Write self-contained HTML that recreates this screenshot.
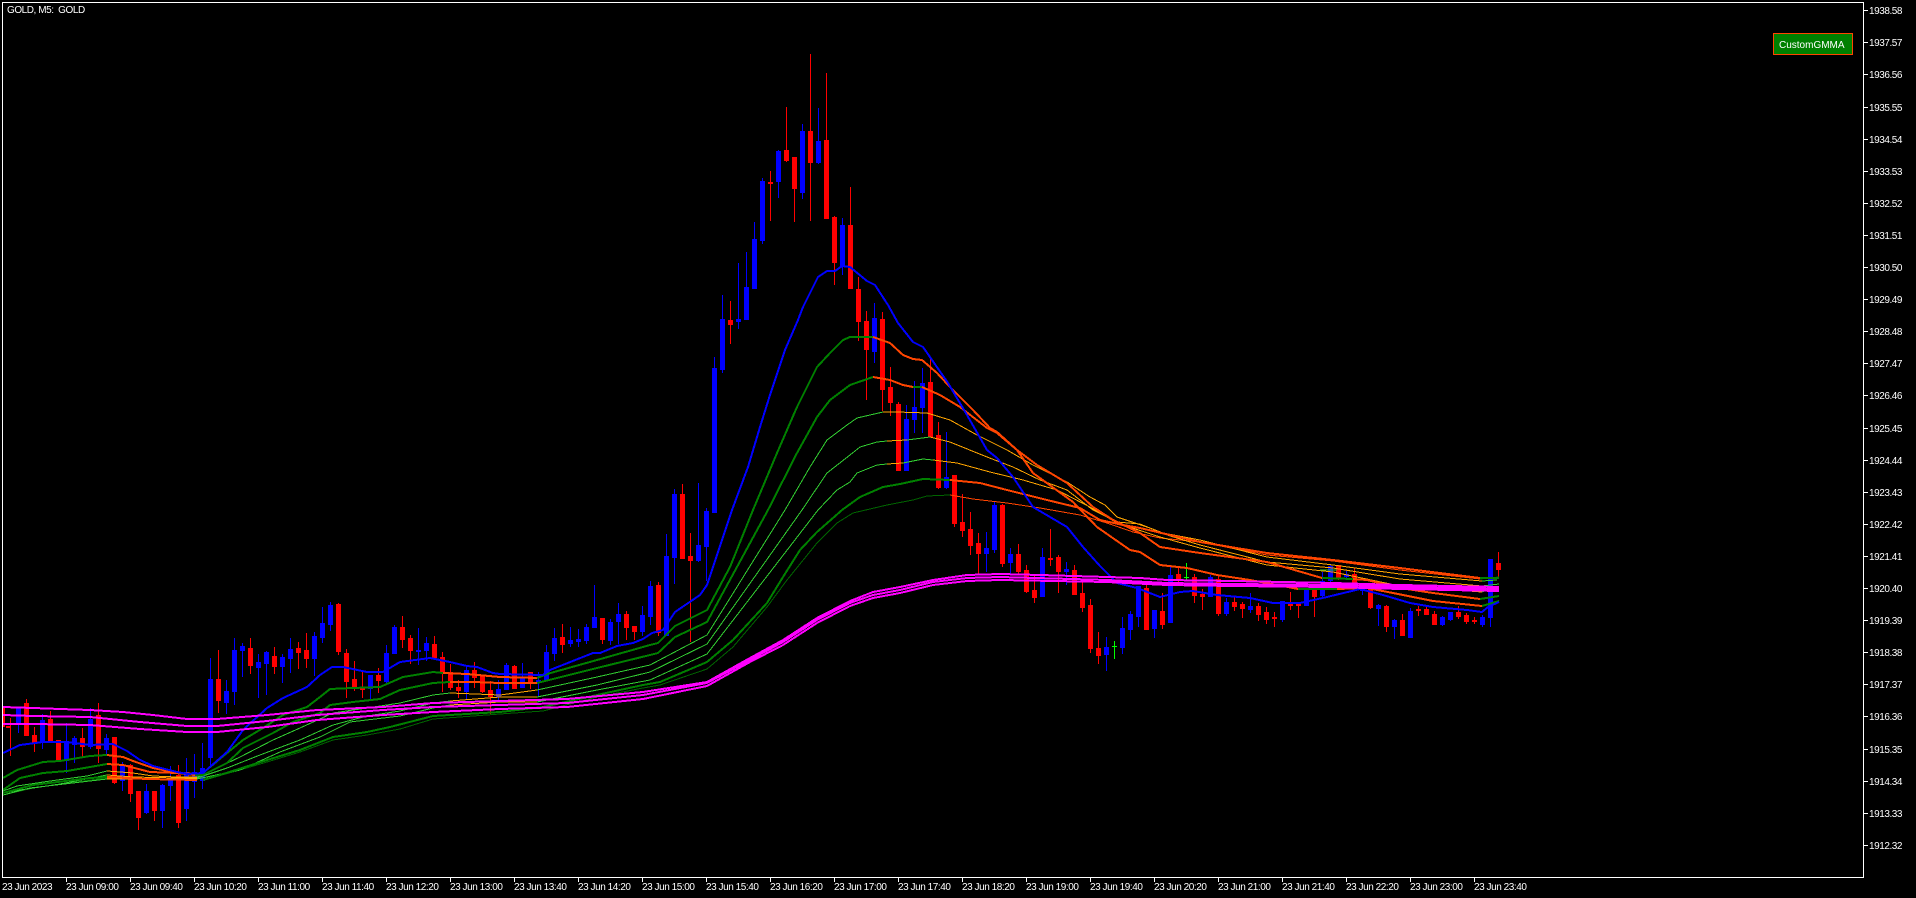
<!DOCTYPE html>
<html lang="en">
<head>
<meta charset="utf-8">
<title>GOLD, M5</title>
<style>
html,body{margin:0;padding:0;background:#000;width:1916px;height:898px;overflow:hidden}
svg{display:block}
text{font-family:"Liberation Sans",sans-serif;font-size:10px;fill:#fff;letter-spacing:-.45px}
.l{fill:none;shape-rendering:crispEdges;stroke-linejoin:round}
.w{stroke-width:1}
.b{stroke-width:5}
.T{stroke-width:2}
.t{stroke-width:1}
.g{stroke:#008000}
.o{stroke:#FF4500}
.lg{stroke:#32CD32}
.y{stroke:#FFA500}
.d{stroke:#006400}
.m{stroke:#FF00FF;stroke-width:2}
</style>
</head>
<body>
<svg width="1916" height="898" viewBox="0 0 1916 898" xmlns="http://www.w3.org/2000/svg">
<rect width="1916" height="898" fill="#000"/>

<!-- red wicks -->
<path class="l w" stroke="#FF0000" d="M10.5 718V756M26.5 699V736M34.5 727V752M50.5 711V742M58.5 740V761M82.5 728V758M98.5 703V763M114.5 737V784M130.5 764V802M138.5 791V830M154.5 791V821M178.5 765V828M218.5 650V713M250.5 638V674M274.5 647V674M298.5 642V669M306.5 633V668M338.5 603V655M346.5 649V698M354.5 661V691M362.5 672V698M378.5 668V693M402.5 616V648M410.5 635V664M434.5 636V660M442.5 652V692M450.5 664V690M458.5 680V698M474.5 662V688M482.5 675V693M490.5 681V714M514.5 665V688M530.5 672V689M562.5 624V653M602.5 618V644M626.5 611V640M634.5 626V640M658.5 582V636M682.5 484V559M690.5 533V642M730.5 301V344M770.5 171V221M786.5 107V162M794.5 157V222M810.5 54V221M826.5 73V218M834.5 216V285M850.5 187V289M858.5 277V341M866.5 311V400M882.5 312V411M890.5 367V416M898.5 402V471M930.5 358V437M938.5 422V489M954.5 475V527M962.5 494V537M970.5 512V555M978.5 533V574M1002.5 504V567M1018.5 544V574M1026.5 565V593M1034.5 576V603M1050.5 529V566M1058.5 555V593M1074.5 565V595M1082.5 582V612M1090.5 599V653M1098.5 632V664M1146.5 585V630M1162.5 593V629M1178.5 567V584M1194.5 574V603M1202.5 589V610M1218.5 575V616M1234.5 597V611M1242.5 602V618M1258.5 603V621M1266.5 607V624M1274.5 612V627M1290.5 592V610M1298.5 604V618M1314.5 587V617M1338.5 565V580M1354.5 568V585M1370.5 587V609M1386.5 605V632M1402.5 614V635M1418.5 606V616M1426.5 607V615M1434.5 611V624M1458.5 606V619M1466.5 613V624M1474.5 617V624M1498.5 552V578"/>
<!-- red bodies -->
<path class="l b" stroke="#FF0000" d="M8.5 726V728M26.5 703V736M34.5 735V744M50.5 719V742M58.5 740V761M82.5 738V747M98.5 715V749M114.5 737V783M130.5 765V794M138.5 791V818M154.5 791V811M178.5 775V823M218.5 679V701M250.5 648V666M274.5 656V667M298.5 648V653M306.5 650V659M338.5 604V652M346.5 653V682M354.5 679V688M362.5 687V690M378.5 675V681M402.5 627V640M410.5 638V651M434.5 644V658M442.5 657V673M450.5 672V688M458.5 687V691M474.5 670V678M482.5 676V692M490.5 690V697M514.5 666V689M530.5 672V683M562.5 637V645M602.5 618V640M626.5 614V628M634.5 626V632M658.5 585V633M682.5 494V559M690.5 556V561M730.5 320V325M770.5 182V184M786.5 150V161M794.5 157V189M810.5 131V163M826.5 140V219M834.5 217V263M850.5 225V289M858.5 289V322M866.5 321V350M882.5 319V390M890.5 387V403M898.5 404V471M930.5 382V437M938.5 435V488M954.5 475V524M962.5 522V531M970.5 529V546M978.5 543V554M1002.5 505V564M1018.5 554V572M1026.5 570V592M1034.5 590V598M1050.5 558V560M1058.5 557V572M1074.5 570V595M1082.5 593V608M1090.5 605V649M1098.5 648V656M1146.5 588V630M1162.5 611V625M1178.5 574V579M1186.5 0V0M1194.5 577V596M1202.5 594V597M1218.5 579V614M1234.5 602V607M1242.5 604V609M1258.5 606V615M1266.5 612V620M1274.5 617V619M1290.5 604V606M1298.5 604V606M1314.5 590V597M1338.5 565V579M1354.5 574V584M1370.5 588V608M1386.5 606V627M1402.5 620V636M1418.5 609V611M1426.5 609V615M1434.5 614V625M1458.5 612V617M1466.5 615V622M1474.5 620V622M1498.5 563V570"/>
<rect x="3" y="707" width="2" height="20" fill="#FF0000"/>
<!-- blue wicks -->
<path class="l w" stroke="#0000FF" d="M18.5 707V733M42.5 714V749M66.5 723V773M74.5 736V763M90.5 708V749M106.5 734V755M122.5 762V791M146.5 784V814M162.5 784V828M170.5 766V801M186.5 758V821M194.5 754V798M202.5 743V789M210.5 658V767M226.5 680V714M234.5 638V705M242.5 643V677M258.5 654V698M266.5 651V695M282.5 654V683M290.5 638V673M314.5 632V676M322.5 607V643M330.5 602V631M370.5 675V700M386.5 645V685M394.5 625V654M418.5 628V665M426.5 637V661M466.5 666V700M498.5 680V700M506.5 663V690M522.5 663V688M538.5 672V697M546.5 645V680M554.5 628V661M570.5 627V647M578.5 629V647M586.5 624V644M594.5 585V628M610.5 619V645M618.5 603V644M642.5 606V636M650.5 581V625M666.5 534V635M674.5 489V584M698.5 483V562M706.5 508V581M714.5 357V512M722.5 295V373M738.5 263V329M746.5 252V320M754.5 222V288M762.5 178V244M778.5 150V198M802.5 124V199M818.5 108V164M842.5 218V275M874.5 303V363M906.5 405V470M914.5 381V433M922.5 368V433M946.5 432V489M986.5 532V572M994.5 501V553M1010.5 548V575M1042.5 548V596M1066.5 562V585M1106.5 637V671M1122.5 617V654M1130.5 611V640M1138.5 586V627M1154.5 610V638M1170.5 567V622M1210.5 575V597M1226.5 598V616M1250.5 593V613M1282.5 601V622M1306.5 590V605M1322.5 572V597M1330.5 565V583M1346.5 571V580M1362.5 583V595M1378.5 604V626M1394.5 619V639M1410.5 608V638M1442.5 616V626M1450.5 612V621M1482.5 615V627M1490.5 559V627"/>
<!-- blue bodies -->
<path class="l b" stroke="#0000FF" d="M18.5 707V724M42.5 720V743M66.5 741V761M74.5 738V745M90.5 719V747M106.5 738V750M122.5 766V781M146.5 791V813M162.5 785V811M170.5 780V786M186.5 772V809M194.5 772V782M202.5 768V781M210.5 679V758M226.5 691V703M234.5 650V692M242.5 646V651M258.5 662V668M266.5 652V664M282.5 657V667M290.5 649V659M314.5 636V659M322.5 623V638M330.5 605V625M370.5 675V689M386.5 653V682M394.5 627V654M418.5 650V652M426.5 643V651M466.5 670V692M498.5 689V697M506.5 665V690M522.5 677V688M538.5 680V683M546.5 652V681M554.5 638V654M570.5 640V644M578.5 639V642M586.5 627V641M594.5 617V628M610.5 622V641M618.5 614V622M642.5 615V632M650.5 586V617M666.5 556V636M674.5 494V558M698.5 545V561M706.5 511V547M714.5 368V513M722.5 319V370M738.5 319V322M746.5 287V320M754.5 239V289M762.5 181V241M778.5 151V182M802.5 131V193M818.5 141V163M842.5 225V267M874.5 318V352M906.5 419V471M914.5 407V420M922.5 383V408M946.5 477V488M986.5 548V554M994.5 505V550M1010.5 554V563M1042.5 557V597M1066.5 569V572M1106.5 647V655M1122.5 628V648M1130.5 614V630M1138.5 586V617M1154.5 610V629M1170.5 575V623M1210.5 577V597M1226.5 602V614M1250.5 606V610M1282.5 601V620M1306.5 590V606M1322.5 581V596M1330.5 566V581M1346.5 574V577M1362.5 587V591M1378.5 605V609M1394.5 620V627M1410.5 611V638M1442.5 617V625M1450.5 612V620M1482.5 617V625M1490.5 559V618"/>
<!-- lime dojis -->
<path class="l w" stroke="#00FF00" d="M1114.5 641V659M1186.5 563V580"/>
<path class="l" stroke="#00FF00" stroke-width="1" d="M1112 646.5H1117M1184 577.5H1189"/>

<!-- thin8 -->
<polyline class="l t d" points="3,795 33,788 90,780 107,778"/>
<polyline class="l t o" points="107,778 197,780"/>
<polyline class="l t d" points="203,780 233,772 267,762 300,752 333,740 367,735 400,729 433,719 500,714 543,711 597,697 643,688 660,685 707,669 733,647 767,607 787,580 817,543 837,523 853,513 887,505 913,500 927,496 950,495"/>
<polyline class="l t o" points="950,495 973,499 1007,503 1040,508 1080,515 1107,523 1133,532 1160,538 1200,542 1267,555 1333,561 1400,570 1480,579"/>
<polyline class="l t d" points="1480,579 1499,577"/>

<!-- thin6 -->
<polyline class="l t lg" points="3,795 30,788 107,779"/>
<polyline class="l t y" points="107,779 197,779"/>
<polyline class="l t lg" points="197,779 240,770 280,752 320,737 350,722 400,716 433,708 450,705"/>
<polyline class="l t y" points="450,705 500,702 537,702"/>
<polyline class="l t lg" points="537,702 597,690 650,680 707,654 818,510 837,490 850,482 857,473 877,465 887,464"/>
<polyline class="l t y" points="887,464 903,463"/>
<polyline class="l t lg" points="903,463 923,459 933,460"/>
<polyline class="l t y" points="933,460 957,463 990,472 1023,480 1057,490 1090,507 1117,523 1160,537 1200,548 1267,565 1333,572 1400,586 1482,592"/>
<polyline class="l t lg" points="1482,592 1490,589"/>

<!-- thin5 -->
<polyline class="l t lg" points="3,793 20,790 60,784 107,775"/>
<polyline class="l t y" points="107,775 133,777 177,778 197,778"/>
<polyline class="l t lg" points="197,778 227,768 260,755 300,740 333,725 367,716 400,711 433,703 450,701"/>
<polyline class="l t y" points="450,701 500,697 537,697"/>
<polyline class="l t lg" points="537,697 597,685 650,672 707,644 802,510 827,473 850,455 860,447 877,442 887,441"/>
<polyline class="l t y" points="887,441 907,440"/>
<polyline class="l t lg" points="907,440 930,437"/>
<polyline class="l t y" points="930,437 950,442 987,457 1013,467 1040,480 1067,490 1093,510 1117,522 1140,524 1167,535 1200,545 1267,562 1333,568 1400,579 1482,586"/>
<polyline class="l t lg" points="1482,586 1499,584"/>

<!-- thin4 -->
<polyline class="l t lg" points="3,791 17,786 50,781 87,776 107,771"/>
<polyline class="l t y" points="107,771 133,773 153,776 177,777 197,777"/>
<polyline class="l t lg" points="197,777 213,770 240,757 273,740 300,728 333,713 367,708 400,703 433,695 450,693"/>
<polyline class="l t y" points="450,693 500,695 537,690"/>
<polyline class="l t lg" points="537,690 597,677 650,665 707,635 785,510 810,467 827,440 847,425 857,418 883,412"/>
<polyline class="l t y" points="883,412 897,412 927,413 950,420 977,435 1007,450 1033,465 1067,482 1090,497 1105,505 1117,517 1150,528 1163,533 1200,540 1267,557 1333,565 1400,574 1482,581"/>
<polyline class="l t lg" points="1482,581 1497,580"/>
<polyline class="l t lg" points="1320,570 1337,570"/>

<!-- thick7 -->
<polyline class="l T g" points="3,793 33,785 90,778 107,777"/>
<polyline class="l T o" points="107,777 147,779 197,780"/>
<polyline class="l T g" points="203,780 220,775 267,760 300,750 333,737 367,732 390,727 433,716 500,712 543,707 597,695 643,685 660,682 700,665 707,662 733,640 767,603 783,577 800,550 817,532 833,518 842,510 860,497 883,487 900,484 923,479 950,480"/>
<polyline class="l T o" points="950,480 980,483 1007,490 1047,500 1080,508 1100,520 1123,525 1140,528 1200,542 1267,553 1333,560 1400,568 1480,578"/>
<polyline class="l T g" points="1480,578 1499,578"/>

<!-- thick3 -->
<polyline class="l T g" points="3,790 20,778 43,773 67,771 90,767 107,764"/>
<polyline class="l T o" points="107,764 123,765 150,772 177,773 195,775"/>
<polyline class="l T g" points="195,775 203,775 227,763 243,748 273,733 293,722 320,713 330,705 353,702 380,699 400,690 433,683 450,682"/>
<polyline class="l T o" points="450,682 473,682 500,683 537,683"/>
<polyline class="l T g" points="537,683 597,668 650,655 658,653 675,637 707,622 768,510 797,453 817,417 830,400 850,385 873,377"/>
<polyline class="l T o" points="873,377 890,380 903,385 913,387"/>
<polyline class="l T g" points="913,387 922,387"/>
<polyline class="l T o" points="922,387 940,395 960,407 987,428 997,433 1017,450 1037,465 1067,483 1093,507 1113,520 1140,533 1160,547 1200,553 1267,562 1322,578"/>
<polyline class="l T g" points="1322,578 1353,579"/>
<polyline class="l T o" points="1353,579 1367,580 1400,588 1433,593 1480,599"/>
<polyline class="l T g" points="1480,599 1499,596"/>

<!-- thick2 -->
<polyline class="l T g" points="3,778 17,770 43,762 60,761 90,756 107,755"/>
<polyline class="l T o" points="107,755 123,757 133,761 153,768 177,773 195,774"/>
<polyline class="l T g" points="195,774 203,773 227,753 243,740 263,728 283,715 307,707 320,697 330,689 353,688 380,687 403,677 433,672 443,673"/>
<polyline class="l T o" points="443,673 467,674 500,677 537,678"/>
<polyline class="l T g" points="537,678 547,674 597,660 650,645 658,643 675,626 707,610 730,567 753,510 777,453 797,407 817,367 830,353 843,340 850,337 873,337"/>
<polyline class="l T o" points="873,337 890,343 903,355 913,359 922,360 937,373 950,387 973,410 990,428 997,432 1017,450 1033,473 1073,502 1097,527 1130,550 1140,552 1160,565 1187,568 1217,575 1250,580 1283,586 1298,589"/>
<polyline class="l T g" points="1298,589 1337,589"/>
<polyline class="l T o" points="1337,589 1367,588 1393,593 1433,601 1482,606"/>
<polyline class="l T g" points="1482,606 1499,601"/>

<!-- blue line -->
<polyline class="l T" stroke="#0000FF" points="3,753 20,745 43,742 67,742 90,745 113,744 127,751 140,760 153,766 177,772 187,774 203,773 227,752 243,730 267,708 283,698 307,687 320,675 332,667 343,667 367,672 383,672 400,662 430,658 450,662 467,666 477,667 493,673 500,674 543,675 550,670 593,653 600,653 617,646 633,643 643,639 652,633 663,630 675,612 700,595 707,585 732,510 748,467 760,427 770,395 785,350 798,320 803,307 818,277 827,271 835,271 842,266 850,267 867,281 875,285 888,305 898,323 913,342 923,347 948,383 967,415 987,450 997,458 1013,477 1033,507 1067,527 1083,547 1100,566 1117,583 1137,588 1160,597 1180,592 1193,591 1217,595 1250,598 1273,603 1300,603 1327,597 1360,589 1383,595 1410,603 1433,607 1467,610 1482,612 1488,607 1499,602"/>

<!-- magenta -->
<polyline class="l m" points="3,707 33,708 60,709 90,710 123,712 153,715 187,719 217,719 267,715 317,710 383,707 433,703 500,701 567,699 643,692 707,682 750,658 783,640 817,618 850,601 873,592 900,587 933,580 967,575 1000,574 1040,575 1107,577 1140,578 1167,580 1233,581 1333,583 1400,585 1499,587"/>
<polyline class="l m" points="3,715 33,716 90,717 140,722 187,726 217,726 267,721 317,715 383,710 433,707 500,705 567,703 643,695 707,683 750,660 783,642 817,620 850,603 873,595 900,590 933,582 967,578 1000,577 1107,580 1167,583 1233,584 1333,585 1400,587 1499,589"/>
<polyline class="l m" points="3,724 33,724 90,725 140,729 187,732 217,732 267,727 317,720 383,715 433,712 500,709 567,707 643,699 707,686 750,662 783,645 817,623 850,606 873,598 900,593 933,585 967,581 1000,580 1107,582 1167,585 1233,586 1333,587 1400,589 1499,591"/>

<!-- frame -->
<rect x="2.5" y="2.5" width="1861" height="875" fill="none" stroke="#fff" stroke-width="1" shape-rendering="crispEdges"/>

<!-- price ticks -->
<path class="l w" stroke="#fff" d="M1864 10.5h4M1864 42.5h4M1864 74.5h4M1864 107.5h4M1864 139.5h4M1864 171.5h4M1864 203.5h4M1864 235.5h4M1864 267.5h4M1864 299.5h4M1864 331.5h4M1864 363.5h4M1864 395.5h4M1864 428.5h4M1864 460.5h4M1864 492.5h4M1864 524.5h4M1864 556.5h4M1864 588.5h4M1864 620.5h4M1864 652.5h4M1864 684.5h4M1864 716.5h4M1864 749.5h4M1864 781.5h4M1864 813.5h4M1864 845.5h4"/>
<!-- time ticks -->
<path class="l w" stroke="#fff" d="M66.5 878v4M130.5 878v4M194.5 878v4M258.5 878v4M322.5 878v4M386.5 878v4M450.5 878v4M514.5 878v4M578.5 878v4M642.5 878v4M706.5 878v4M770.5 878v4M834.5 878v4M898.5 878v4M962.5 878v4M1026.5 878v4M1090.5 878v4M1154.5 878v4M1218.5 878v4M1282.5 878v4M1346.5 878v4M1410.5 878v4M1474.5 878v4"/>

<!-- price labels -->
<g>
<text x="1869" y="14">1938.58</text>
<text x="1869" y="46">1937.57</text>
<text x="1869" y="78">1936.56</text>
<text x="1869" y="111">1935.55</text>
<text x="1869" y="143">1934.54</text>
<text x="1869" y="175">1933.53</text>
<text x="1869" y="207">1932.52</text>
<text x="1869" y="239">1931.51</text>
<text x="1869" y="271">1930.50</text>
<text x="1869" y="303">1929.49</text>
<text x="1869" y="335">1928.48</text>
<text x="1869" y="367">1927.47</text>
<text x="1869" y="399">1926.46</text>
<text x="1869" y="432">1925.45</text>
<text x="1869" y="464">1924.44</text>
<text x="1869" y="496">1923.43</text>
<text x="1869" y="528">1922.42</text>
<text x="1869" y="560">1921.41</text>
<text x="1869" y="592">1920.40</text>
<text x="1869" y="624">1919.39</text>
<text x="1869" y="656">1918.38</text>
<text x="1869" y="688">1917.37</text>
<text x="1869" y="720">1916.36</text>
<text x="1869" y="753">1915.35</text>
<text x="1869" y="785">1914.34</text>
<text x="1869" y="817">1913.33</text>
<text x="1869" y="849">1912.32</text>
</g>

<!-- time labels -->
<g>
<text x="2" y="890">23 Jun 2023</text>
<text x="66" y="890">23 Jun 09:00</text>
<text x="130" y="890">23 Jun 09:40</text>
<text x="194" y="890">23 Jun 10:20</text>
<text x="258" y="890">23 Jun 11:00</text>
<text x="322" y="890">23 Jun 11:40</text>
<text x="386" y="890">23 Jun 12:20</text>
<text x="450" y="890">23 Jun 13:00</text>
<text x="514" y="890">23 Jun 13:40</text>
<text x="578" y="890">23 Jun 14:20</text>
<text x="642" y="890">23 Jun 15:00</text>
<text x="706" y="890">23 Jun 15:40</text>
<text x="770" y="890">23 Jun 16:20</text>
<text x="834" y="890">23 Jun 17:00</text>
<text x="898" y="890">23 Jun 17:40</text>
<text x="962" y="890">23 Jun 18:20</text>
<text x="1026" y="890">23 Jun 19:00</text>
<text x="1090" y="890">23 Jun 19:40</text>
<text x="1154" y="890">23 Jun 20:20</text>
<text x="1218" y="890">23 Jun 21:00</text>
<text x="1282" y="890">23 Jun 21:40</text>
<text x="1346" y="890">23 Jun 22:20</text>
<text x="1410" y="890">23 Jun 23:00</text>
<text x="1474" y="890">23 Jun 23:40</text>
</g>

<!-- title -->
<text x="7" y="13" xml:space="preserve" style="white-space:pre">GOLD, M5:  GOLD</text>

<!-- button -->
<rect x="1773.5" y="33.5" width="79" height="21" fill="#008000" stroke="#FF4500" stroke-width="1" shape-rendering="crispEdges"/>
<text x="1779" y="48" style="letter-spacing:0">CustomGMMA</text>
</svg>
</body>
</html>
